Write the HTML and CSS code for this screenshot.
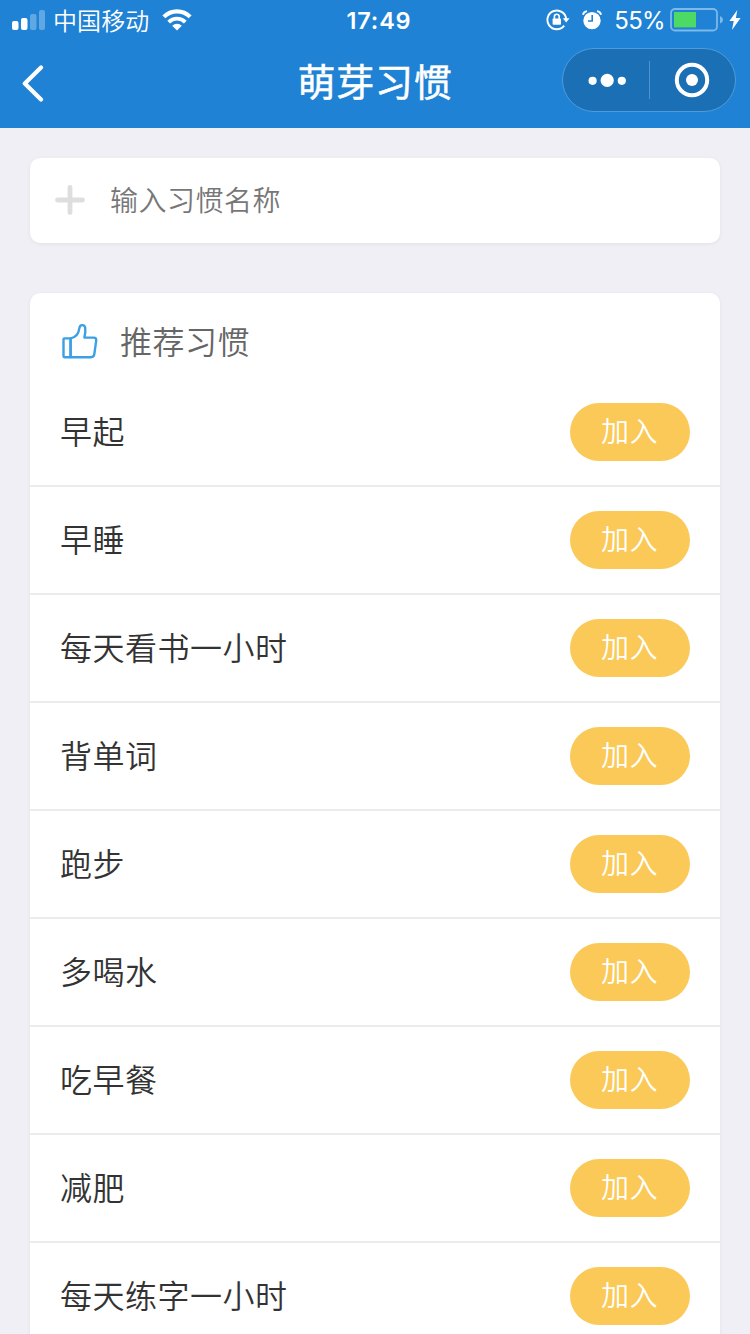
FILE: index.html
```html
<!DOCTYPE html>
<html lang="zh-CN">
<head>
<meta charset="utf-8">
<title>萌芽习惯</title>
<link rel="stylesheet" href="styles.css">
</head>
<body>
<header class="header">
  <div class="status">
    <div class="status-left">
      <svg class="signal" width="34" height="20" viewBox="0 0 34 20">
        <rect x="0" y="11" width="6.5" height="9" rx="2" fill="#fff"/>
        <rect x="9" y="8" width="6.5" height="12" rx="2" fill="#fff"/>
        <rect x="18" y="4" width="6.5" height="16" rx="2" fill="#5fa8e4"/>
        <rect x="27" y="0" width="6" height="20" rx="2" fill="#5fa8e4"/>
      </svg>
      <span class="carrier">中国移动</span>
      <svg class="wifi" width="30" height="22" viewBox="0 0 30 22">
        <path d="M1.9 7.9a18.2 18.2 0 0 1 26.2 0" fill="none" stroke="#fff" stroke-width="4.2"/>
        <path d="M6.7 13.1a11.6 11.6 0 0 1 16.6 0" fill="none" stroke="#fff" stroke-width="3.8"/>
        <path d="M10.2 16.8a6.8 6.8 0 0 1 9.6 0L15 21.4z" fill="#fff"/>
      </svg>
    </div>
    <span class="time">17:49</span>
    <div class="status-right">
      <svg class="lock" width="24" height="22" viewBox="0 0 24 22">
        <path d="M20.200 10.500A9.400 9.400 0 1 0 18.200 16.700" fill="none" stroke="#fff" stroke-width="1.9"/>
        <path d="M16.800 9.300h6.800l-3.400 4.300z" fill="#fff"/>
        <rect x="6.600" y="9.400" width="8.400" height="6.400" rx=".8" fill="#fff"/>
        <path d="M8.400 10V7.600a2.400 2.400 0 0 1 4.800 0V10" fill="none" stroke="#fff" stroke-width="1.6"/>
      </svg>
      <svg class="alarm" width="20" height="20" viewBox="0 0 20 20">
        <circle cx="10" cy="10.600" r="8.700" fill="#fff"/>
        <path d="M.9 4.700A5 5 0 0 1 5 1.100M15 1.100A5 5 0 0 1 19.100 4.700" fill="none" stroke="#fff" stroke-width="1.9"/>
        <path d="M10.200 5v6H6" fill="none" stroke="#2082d4" stroke-width="1.600"/>
      </svg>
      <span class="percent">55%</span>
      <svg class="battery" width="53" height="24" viewBox="0 0 53 24">
        <rect x="1" y="1" width="46" height="21.500" rx="4" fill="none" stroke="#7db9e9" stroke-width="1.8"/>
        <rect x="4" y="4" width="22" height="15.400" fill="#4cd964"/>
        <path d="M50 8.200q3 1 3 3.600t-3 3.600z" fill="#7db9e9"/>
      </svg>
      <svg class="bolt" width="12" height="20" viewBox="0 0 12 20">
        <path d="M8.300 0L.4 11h4.300L3 20 11.600 8H6.900z" fill="#fff"/>
      </svg>
    </div>
  </div>
  <div class="nav">
    <svg class="back" width="24" height="38" viewBox="0 0 24 38">
      <path d="M20 3.600L3.800 19.600 20 35.600" fill="none" stroke="#fff" stroke-width="4.200" stroke-linecap="round" stroke-linejoin="round"/>
    </svg>
    <h1 class="title">萌芽习惯</h1>
    <div class="capsule">
      <svg class="more" width="40" height="16" viewBox="0 0 40 16">
        <circle cx="5.600" cy="8.800" r="4.100" fill="#fff"/>
        <circle cx="20.200" cy="8.400" r="6.600" fill="#fff"/>
        <circle cx="34.800" cy="8.800" r="4.100" fill="#fff"/>
      </svg>
      <span class="divider"></span>
      <svg class="close" width="36" height="36" viewBox="0 0 36 36">
        <circle cx="18" cy="18" r="15.200" fill="none" stroke="#fff" stroke-width="4"/>
        <circle cx="18" cy="18" r="6" fill="#fff"/>
      </svg>
    </div>
  </div>
</header>
<main class="content">
  <div class="card entry">
    <svg width="30" height="30" viewBox="0 0 30 30">
      <path d="M2.500 15h25M15 2.500v25" stroke="#dedede" stroke-width="4.800" stroke-linecap="round"/>
    </svg>
    <span class="placeholder">输入习惯名称</span>
  </div>
  <section class="card">
    <div class="section-head">
      <svg width="36" height="36" viewBox="0 0 36 36" fill="none" stroke="#3ba0e6" stroke-width="2.400" stroke-linejoin="round" stroke-linecap="round">
        <path d="M8.600 15.400H2.600a1.100 1.100 0 0 0-1.100 1.100v16.600A1.100 1.100 0 0 0 2.600 34.200h26.500c1.700 0 2.700-.7 3.100-2.400L34.200 17.600c.3-2-.7-3-2.600-3H22.400c.8-3.400 1.300-7 .8-10C22.800 2.900 21.600 2 20 2.100c-1.600.1-2.300 1.200-2.600 3C16.700 9.700 14 14.600 8.600 15.400zV34"/>
        <path d="M8.600 15.400V34"/>
      </svg>
      <h2 class="section-title">推荐习惯</h2>
    </div>
    <ul class="list">
      <li class="row"><span class="name">早起</span><button class="add">加入</button></li>
      <li class="row"><span class="name">早睡</span><button class="add">加入</button></li>
      <li class="row"><span class="name">每天看书一小时</span><button class="add">加入</button></li>
      <li class="row"><span class="name">背单词</span><button class="add">加入</button></li>
      <li class="row"><span class="name">跑步</span><button class="add">加入</button></li>
      <li class="row"><span class="name">多喝水</span><button class="add">加入</button></li>
      <li class="row"><span class="name">吃早餐</span><button class="add">加入</button></li>
      <li class="row"><span class="name">减肥</span><button class="add">加入</button></li>
      <li class="row"><span class="name">每天练字一小时</span><button class="add">加入</button></li>
    </ul>
  </section>
</main>
</body>
</html>
```
FILE: styles.css
```css
* { box-sizing: border-box; }
body {
  margin: 0;
  height: 1334px;
  overflow: hidden;
  background: #efeff5;
  font-family: "Noto Sans CJK SC", sans-serif;
}
svg { display: block; flex: none; }
.header { height: 128px; background: #2082d4; color: #fff; }
.status {
  height: 40px;
  display: grid;
  grid-template-columns: 1fr auto 1fr;
  grid-template-rows: 40px;
  padding: 0 9px 0 12px;
  align-items: center;
}
.status-left, .status-right { display: flex; align-items: center; height: 40px; }
.status-right { justify-content: flex-end; }
.carrier {
  margin-left: 7px;
  padding-bottom: 1px;
  font-size: 24px;
  line-height: 39px;
  font-weight: 350;
  letter-spacing: 0.1px;
}
.wifi { margin-left: 13px; }
.time {
  padding-top: 1px;
  font: 600 23.5px/40px Inter, sans-serif;
  letter-spacing: 0.8px;
  margin-left: 5px;
}
.lock { margin-right: 0; }
.alarm { margin-left: 12px; }
.percent {
  margin-left: 12px;
  padding-top: 2px;
  font: 400 24px/40px Inter, sans-serif;
  letter-spacing: -0.7px;
}
.battery { margin-left: 5px; }
.bolt { margin-left: 6px; }
.nav {
  height: 88px;
  display: grid;
  grid-template-columns: 1fr auto 1fr;
  align-items: start;
  padding: 0 14px 0 21px;
}
.back { margin-top: 24px; }
.title {
  margin: 0 0 0 -7px;
  font-size: 38px;
  line-height: 80px;
  font-weight: 400;
  letter-spacing: 0.7px;
  -webkit-text-stroke: 0.5px #fff;
}
.capsule {
  justify-self: end;
  width: 174px;
  height: 64px;
  margin-top: 8px;
  border: 1px solid #4d9bdc;
  border-radius: 32px;
  background: #1b70b5;
  display: flex;
  align-items: center;
}
.more { margin-left: 24px; }
.divider { width: 1px; height: 38px; margin-left: 22px; background: #4b94d0; }
.close { margin-left: 24px; }
.content { padding: 30px; display: flex; flex-direction: column; gap: 50px; }
.card {
  background: #fff;
  border-radius: 10px;
  box-shadow: 0 1px 4px rgba(0, 0, 0, 0.06);
}
.entry { height: 85px; display: flex; align-items: center; padding: 0 0 1px 25px; }
.placeholder {
  margin-left: 25px;
  padding-bottom: 2px;
  font-size: 28px;
  line-height: 80px;
  font-weight: 350;
  color: #777;
  letter-spacing: 0.5px;
}
.section-head { height: 86px; display: flex; align-items: center; padding: 10px 0 0 32px; }
.section-title {
  margin: 0 0 0 22px;
  padding-bottom: 2px;
  font-size: 32px;
  line-height: 72px;
  font-weight: 350;
  color: #666;
  letter-spacing: 0.5px;
}
.list { margin: 0; padding: 0; list-style: none; }
.row {
  height: 108px;
  border-bottom: 2px solid #ebebed;
  display: flex;
  align-items: center;
  justify-content: space-between;
  padding: 0 30px;
}
.name {
  padding-bottom: 4px;
  font-size: 32px;
  line-height: 100px;
  font-weight: 350;
  color: #333;
  letter-spacing: 0.5px;
}
.add {
  width: 120px;
  height: 58px;
  padding: 0 1px 4px 0;
  border: 0;
  border-radius: 29px;
  background: #fac957;
  color: #fff;
  font: 350 28px/54px "Noto Sans CJK SC", sans-serif;
  letter-spacing: 0.5px;
}
```
